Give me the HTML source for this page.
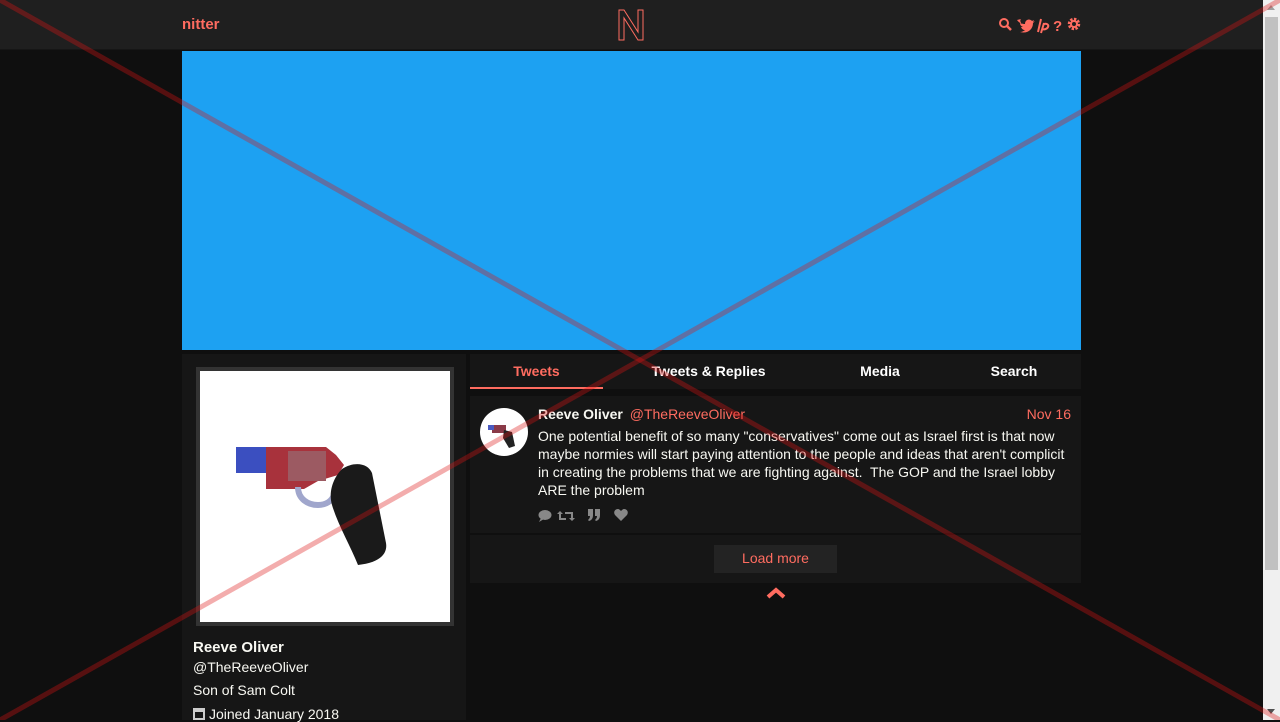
<!DOCTYPE html>
<html><head><meta charset="utf-8"><style>
*{box-sizing:border-box;margin:0;padding:0}
html,body{width:1280px;height:720px;overflow:hidden;background:#0f0f0f;font-family:"Liberation Sans",Arial,sans-serif;color:#f8f8f2}
.nav{position:absolute;left:0;top:0;width:1263px;height:50px;background:#1f1f1f;border-bottom:1px solid #161616}
.logo{position:absolute;left:182px;top:16px;color:#ff6c60;font-weight:bold;font-size:15px}
.banner{position:absolute;left:182px;top:51px;width:899px;height:299px;background:#1da1f2}
.card{position:absolute;left:182px;top:354px;width:284px;height:366px;background:#161616}
.av{position:absolute;left:14px;top:13px;width:258px;height:259px;background:#fff;border:4px solid #333}
.tabs{position:absolute;left:470px;top:354px;width:611px;height:35px;background:#161616}
.tab{position:absolute;top:9px;font-weight:bold;font-size:14px;color:#fff;text-align:center}
.tweet{position:absolute;left:470px;top:396px;width:611px;height:137px;background:#161616}
.lm{position:absolute;left:470px;top:535px;width:611px;height:48px;background:#161616}
.sb{position:absolute;left:1263px;top:0;width:17px;height:720px;background:#f0f0f0}
</style></head><body>
<div class="nav">
<div class="logo">nitter</div>
<svg style="position:absolute;left:618px;top:9px" width="27" height="32" viewBox="0 0 27 32"><path d="M1 1h5l14 22V1h5v30h-5L6 9v22H1z" fill="none" stroke="#ff6c60" stroke-width="1"/></svg>
<svg style="position:absolute;left:998px;top:16px" width="85" height="18" viewBox="0 0 85 18" fill="#ff6c60">
<circle cx="6" cy="7" r="4" fill="none" stroke="#ff6c60" stroke-width="2"/><path d="M9 10l4 4" stroke="#ff6c60" stroke-width="2.5"/>
<path d="M19 4c2 3 5 4 8 4 0-4 4-6 7-3l2-1-1 2 2-1-2 2c0 7-6 11-13 9 2 0 4-1 5-2-2 0-3-1-4-3h2c-2-1-3-2-3-4l2 1c-2-2-2-4-1-5z"/>
<path d="M43 3l-3 13M46 7l-3 10M46 8c3-1 5 1 4 3s-4 3-6 2" fill="none" stroke="#ff6c60" stroke-width="2"/>
<text x="55" y="15" font-size="15" font-weight="bold" font-family="Liberation Sans">?</text>
<circle cx="76" cy="8" r="4.5" fill="none" stroke="#ff6c60" stroke-width="3.5" stroke-dasharray="2.2 1.3"/><circle cx="76" cy="8" r="3" fill="none" stroke="#ff6c60" stroke-width="2"/>
</svg>
</div>
<div class="banner"></div>
<div class="card">
<div class="av"><svg width="250" height="251" viewBox="0 0 250 251">
<path d="M36 76h32v26H36z" fill="#3b4fc0"/>
<path d="M66 76h60l10 8 8 10-6 10-20 6-14 8H66z" fill="#a8323c"/>
<rect x="88" y="80" width="38" height="30" fill="#9c5a62"/>
<path d="M98 116c0 12 10 18 20 18 8 0 14-4 16-10" fill="none" stroke="#a0a6cc" stroke-width="6"/>
<path d="M142 98c12-8 26-6 30 4l14 70c2 12-8 20-28 22-8-20-20-40-26-60-4-14 2-28 10-36z" fill="#1a1a1a"/>
</svg></div>
<div style="position:absolute;left:11px;top:285px;font-weight:bold;font-size:15px">Reeve Oliver</div>
<div style="position:absolute;left:11px;top:305px;font-size:14px">@TheReeveOliver</div>
<div style="position:absolute;left:11px;top:328px;font-size:14px">Son of Sam Colt</div>
<div style="position:absolute;left:11px;top:352px;font-size:14px"><span style="display:inline-block;width:12px;height:12px;border:2px solid #ccc;border-top-width:4px;margin-right:4px;vertical-align:-1px"></span>Joined January 2018</div>
</div>
<div class="tabs">
<div class="tab" style="left:0;width:133px;color:#ff6c60">Tweets</div>
<div style="position:absolute;left:0;top:33px;width:133px;height:2px;background:#ff6c60"></div>
<div class="tab" style="left:170px;width:137px">Tweets &amp; Replies</div>
<div class="tab" style="left:380px;width:60px">Media</div>
<div class="tab" style="left:514px;width:60px">Search</div>
</div>
<div class="tweet">
<div style="position:absolute;left:10px;top:12px;width:48px;height:48px;border-radius:50%;background:#fff;overflow:hidden"><svg width="48" height="48"><rect x="12" y="17" width="14" height="8" fill="#8a3a48"/><rect x="8" y="17" width="6" height="5" fill="#4a5ac0"/><path d="M24 22l8 2 3 14-6 2-6-10z" fill="#222"/></svg></div>
<div style="position:absolute;left:68px;top:10px;font-size:14px"><b>Reeve Oliver</b> <span style="color:#ff6c60;margin-left:3px">@TheReeveOliver</span></div>
<div style="position:absolute;right:10px;top:10px;font-size:14px;color:#ff6c60">Nov 16</div>
<div style="position:absolute;left:68px;top:31px;width:535px;font-size:14px;line-height:18px">One potential benefit of so many "conservatives" come out as Israel first is that now maybe normies will start paying attention to the people and ideas that aren't complicit in creating the problems that we are fighting against.&nbsp; The GOP and the Israel lobby ARE the problem</div>
<svg style="position:absolute;left:68px;top:112px" width="92" height="14" fill="#888">
<ellipse cx="7" cy="7" rx="6.5" ry="5"/><path d="M3 10l-2 4 5-3z"/>
<path d="M27 4h8v6h2l-3 3-3-3h2V6h-6zM28 12h-7V6h-2l3-3 3 3h-2v4h5z"/>
<path d="M50 1h5v6c0 3-1 5-4 6l-1-1c1-1 2-2 2-4h-2zM57 1h5v6c0 3-1 5-4 6l-1-1c1-1 2-2 2-4h-2z"/>
<path d="M83 13l-6-6c-2-3 0-6 3-6 1 0 2 1 3 2 1-1 2-2 3-2 3 0 5 3 3 6z"/>
</svg>
</div>
<div class="lm"><div style="position:absolute;left:244px;top:10px;width:123px;height:28px;background:#232323;color:#ff6c60;font-size:14px;text-align:center;line-height:27px">Load more</div></div>
<svg style="position:absolute;left:766px;top:587px" width="20" height="12"><path d="M2 10l8-7 8 7" fill="none" stroke="#ff6c60" stroke-width="4"/></svg>
<div class="sb"><div style="position:absolute;left:2px;top:17px;width:13px;height:553px;background:#c1c1c1"></div>
<div style="position:absolute;left:4px;top:5px;border:4px solid transparent;border-bottom:5px solid #a0a0a0;border-top:0"></div>
<div style="position:absolute;left:4px;top:709px;border:4px solid transparent;border-top:5px solid #505050;border-bottom:0"></div></div>
<svg style="position:absolute;left:0;top:0" width="1280" height="720"><g stroke="rgba(220,20,20,0.35)" stroke-width="5"><line x1="0" y1="0" x2="1280" y2="720"/><line x1="1280" y1="0" x2="0" y2="720"/></g></svg>
</body></html>
